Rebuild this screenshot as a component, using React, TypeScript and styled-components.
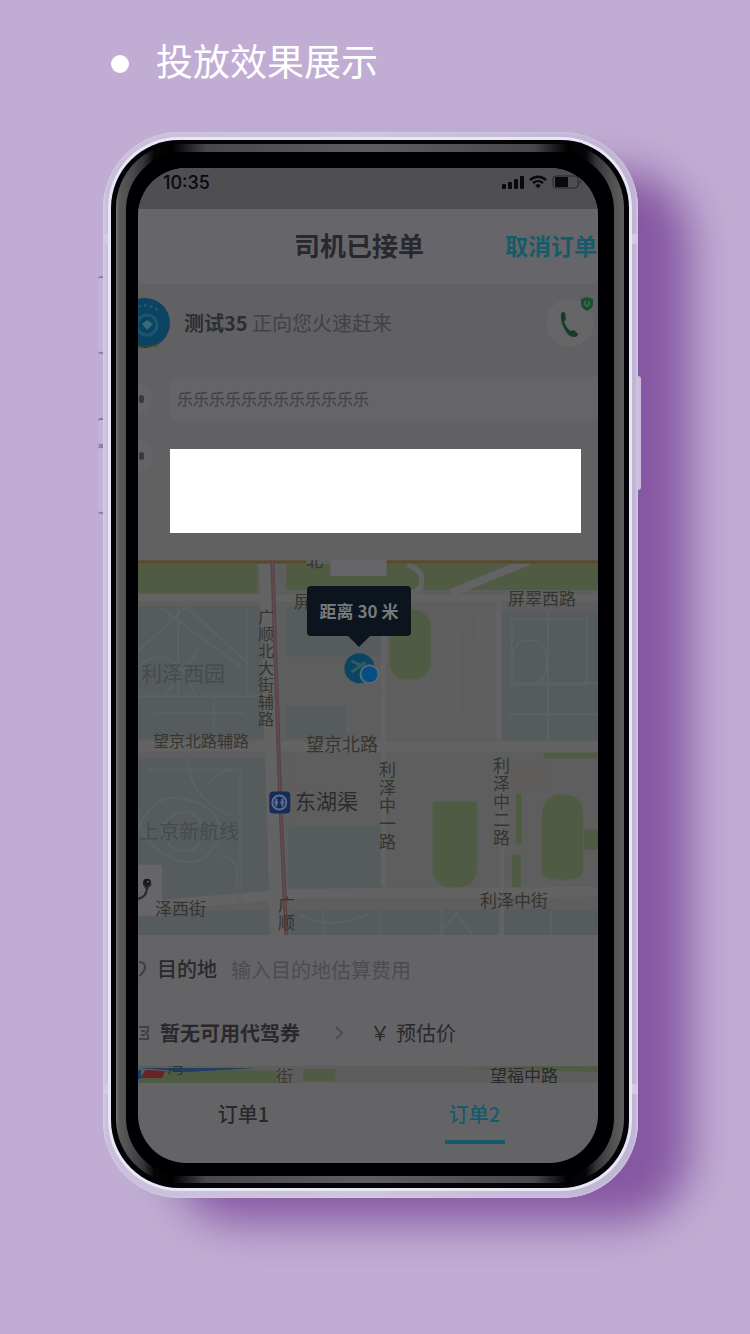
import React from 'react';
import styled, { createGlobalStyle } from 'styled-components';

const GlobalStyle = createGlobalStyle`
  * { box-sizing: border-box; }
  body {
    margin: 0;
    background: #c1add3;
    font-family: "Noto Sans CJK SC", "Liberation Sans", sans-serif;
  }
  button, input { font-family: inherit; border: 0; padding: 0; margin: 0; background: none; }
  h1, h2, p { margin: 0; }
`;

const Page = styled.main`
  min-height: 100vh;
  padding: 34px 112px 136px 103px;
  overflow: hidden;
`;

const Heading = styled.header`
  display: flex;
  align-items: flex-start;
  gap: 27px;
  height: 56px;
  margin-bottom: 42px;
  padding: 0 0 0 8px;
  color: #fff;
`;

const Bullet = styled.span`
  width: 18px;
  height: 18px;
  margin-top: 21px;
  border-radius: 50%;
  background: #fff;
`;

const PageTitle = styled.h1`
  font-size: 37px;
  line-height: 52px;
  font-weight: 400;
  white-space: nowrap;
`;

const Phone = styled.section`
  position: relative;
  min-width: 420px;
  padding: 8px 9px 10px 8px;
  border-radius: 76px;
  background: linear-gradient(90deg, #d3cae2 0, #c9bfdb 4px, #cdc4de 50%, #c0b5d4 calc(100% - 3px), #d0c6e1 100%);
  box-shadow: 60px 32px 44px -8px #8657a2, inset 0 0 2px #ddd4ea;
`;

const SideKey = styled.span<{ $side: 'left' | 'right'; $top: number; $height: number }>`
  position: absolute;
  ${(p) => p.$side}: ${(p) => (p.$side === 'right' ? '-3px' : '-5px')};
  top: ${(p) => p.$top}px;
  width: ${(p) => (p.$side === 'right' ? '3px' : '5px')};
  height: ${(p) => p.$height}px;
  border-radius: ${(p) => (p.$side === 'right' ? '0 3px 3px 0' : '3px 0 0 3px')};
  background: ${(p) => (p.$side === 'right' ? '#c9bfdc' : '#c3b3d8')};
  border-top: ${(p) => (p.$side === 'left' ? '2px solid #8a7d9d' : '0')};
  border-bottom: ${(p) => (p.$side === 'left' ? '2px solid #8a7d9d' : '0')};
`;

const Antenna = styled.span<{ $side: 'left' | 'right'; $top: number }>`
  position: absolute;
  ${(p) => p.$side}: 0;
  top: ${(p) => p.$top}px;
  width: 9px;
  height: 10px;
  background: #d3cbe0;
`;

const Rim = styled.div`
  position: relative;
  padding: 4px 5px 5px;
  border-radius: 68px;
  background: #030307;
  box-shadow: 0 0 0 3px #e9e6f5;
`;

const Bevel = styled.div`
  padding: 8px 10px 7px;
  border-radius: 64px;
  background: linear-gradient(90deg, #76767a 0, #5a5a5a 3px, #4d4d4e 14px, #343436 28px, #050507 38px, #000 56px, #48484a 90px, #5e5e60 50%, #48484a calc(100% - 90px), #000 calc(100% - 56px), #050507 calc(100% - 38px), #343436 calc(100% - 28px), #4d4d4e calc(100% - 14px), #5f5f5f 100%);
`;

const Bezel = styled.div`
  padding: 16px 16px 13px 12px;
  border-radius: 58px;
  background: #000004;
`;

const Screen = styled.div`
  overflow: hidden;
  border-radius: 48px;
  background: #646467;
  color: #29292d;
`;

const StatusBar = styled.div`
  display: flex;
  justify-content: space-between;
  height: 41px;
  padding: 4px 16px 0 25px;
  background: #4f4e52;
  color: #09090b;
  font: 500 18px/22px Inter, "Liberation Sans", sans-serif;
`;

const StatusIcons = styled.span`
  display: flex;
  align-items: center;
  gap: 5px;
  height: 20px;
`;

const NavBar = styled.div`
  display: grid;
  grid-template-columns: 1fr auto 1fr;
  align-items: center;
  height: 75px;
  padding: 0 0 4px;
  margin: 0 -16px 0 0;
  background: #66666a;
`;

const NavTitle = styled.h2`
  grid-column: 2;
  font-size: 26px;
  line-height: 36px;
  font-weight: 700;
  margin-right: 14px;
  margin-left: -20px;
`;

const CancelButton = styled.button`
  justify-self: end;
  margin-right: 17px;
  color: #155b6a;
  font-size: 23px;
  line-height: 36px;
  font-weight: 700;
  white-space: nowrap;
`;

const DriverRow = styled.div`
  display: flex;
  align-items: center;
  height: 77px;
  margin-left: -18px;
  padding-right: 4px;
  background: #616164;
`;

const DriverText = styled.p`
  flex: 1;
  margin-left: 14px;
  font-size: 20px;
  line-height: 28px;
  color: #3f4247;
  white-space: nowrap;
  b { color: #2c2e33; }
`;

const CallButton = styled.button`
  position: relative;
  width: 48px;
  height: 48px;
  border-radius: 50%;
  background: #666669;
`;

const Shield = styled.svg`
  position: absolute;
  top: -2px;
  right: 0;
`;

const Messages = styled.div`
  display: grid;
  gap: 13px;
  padding-top: 16px;
  background: #616164;
`;

const MessageRow = styled.div`
  display: flex;
  align-items: center;
  gap: 17px;
  height: 44px;
  margin-left: -18px;
`;

const Knob = styled.span`
  display: flex;
  align-items: center;
  justify-content: flex-end;
  width: 32px;
  height: 32px;
  padding-right: 8px;
  border-radius: 50%;
  background: #646468;
  &::after { content: ''; width: 5px; height: 8px; border-radius: 3px; background: #3a3a3e; }
`;

const Bubble = styled.p`
  flex: 1;
  padding-left: 8px;
  border-radius: 8px 0 0 8px;
  background: #656569;
  color: #404044;
  font-size: 16px;
  line-height: 42px;
  height: 44px;
  white-space: nowrap;
`;

const AdArea = styled.div`
  margin-top: -29px;
  padding: 0 17px 27px 32px;
  background: #616162;
`;

const AdSlot = styled.div`
  position: relative;
  height: 84px;
  background: #fff;
`;

const Map = styled.div`
  position: relative;
  height: 375px;
  overflow: hidden;
  background: #5d5e5d;
  color: #353530;
  > svg { display: block; width: 100%; height: 100%; }
`;

const Label = styled.span<{ $x: number; $y: number; $size?: number; $vertical?: boolean; $color?: string }>`
  position: absolute;
  left: ${(p) => p.$x}px;
  top: ${(p) => p.$y}px;
  width: ${(p) => (p.$vertical ? '18px' : 'auto')};
  font-size: ${(p) => p.$size ?? 17}px;
  line-height: ${(p) => (p.$vertical ? `${(p.$size ?? 17) + 1}px` : '24px')};
  white-space: ${(p) => (p.$vertical ? 'normal' : 'nowrap')};
  color: ${(p) => p.$color ?? 'inherit'};
`;

const Tooltip = styled.div`
  position: absolute;
  left: 169px;
  top: 26px;
  width: 104px;
  border-radius: 4px;
  background: #0c151d;
  color: #77797c;
  font-size: 17px;
  font-weight: 700;
  line-height: 50px;
  text-align: center;
  white-space: nowrap;
  &::after {
    content: '';
    position: absolute;
    left: 40px;
    top: 49px;
    border: 12px solid transparent;
    border-top-color: #0c151d;
    border-bottom: 0;
  }
`;

const DestinationRow = styled.label`
  display: flex;
  align-items: center;
  gap: 14px;
  height: 68px;
  padding-left: 1px;
  background: #646467;
  font-size: 20px;
  line-height: 28px;
  font-weight: 500;
`;

const DestinationInput = styled.input`
  flex: 1;
  min-width: 0;
  height: 32px;
  font-size: 20px;
  color: #29292d;
  &::placeholder { color: #4c4c50; opacity: 1; }
`;

const CouponRow = styled.div`
  display: flex;
  align-items: center;
  height: 63px;
  padding-left: 1px;
  padding-bottom: 4px;
  font-size: 20px;
  line-height: 28px;
  white-space: nowrap;
`;

const RowIcon = styled.svg`
  flex: none;
  margin-right: 10px;
`;

const DestinationName = styled.span`
  margin-left: -4px;
`;

const CouponName = styled.span`
  font-weight: 700;
`;

const Chevron = styled.svg`
  margin: 0 26px 0 34px;
`;

const Price = styled.span`
  display: flex;
  gap: 6px;
`;

const MapStrip = styled.div`
  position: relative;
  height: 17px;
  overflow: hidden;
  > svg { display: block; width: 100%; height: 100%; }
`;

const Tabs = styled.nav`
  display: flex;
  height: 80px;
  margin: 0 8px 0 -10px;
`;

const Tab = styled.button<{ $active?: boolean }>`
  position: relative;
  flex: 1;
  padding-bottom: 20px;
  color: ${(p) => (p.$active ? '#155b6a' : '#29292d')};
  font-size: 20px;
  font-weight: 500;
  &::after {
    content: '';
    position: absolute;
    left: calc(50% - 30px);
    bottom: 19px;
    width: 60px;
    height: 4px;
    background: ${(p) => (p.$active ? '#17586b' : 'transparent')};
  }
`;

const Signal = () => (
  <svg width="22" height="14" viewBox="0 0 22 14" fill="#09090b">
    <rect x="0" y="9" width="4" height="5" rx="1" />
    <rect x="6" y="7" width="4" height="7" rx="1" />
    <rect x="12" y="4" width="4" height="10" rx="1" />
    <rect x="18" y="1" width="4" height="13" rx="1" />
  </svg>
);

const Wifi = () => (
  <svg width="18" height="14" viewBox="0 0 18 14" fill="none" stroke="#09090b" strokeWidth="2.3">
    <path d="M1 5.1C5.5.6 12.5.6 17 5.1M4 8.2c3-2.8 7-2.8 10 0" />
    <path d="M6.2 10.4c1.7-1.5 3.9-1.5 5.6 0L9 13.3z" fill="#09090b" stroke="none" />
  </svg>
);

const Battery = () => (
  <svg width="30" height="14" viewBox="0 0 30 14">
    <rect x="1" y="1" width="25" height="12" rx="3" fill="none" stroke="#29292c" />
    <rect x="3" y="2" width="13" height="10" rx="1" fill="#09090b" />
    <path d="M27.5 5v4c2-1 2-3 0-4z" fill="#29292c" />
  </svg>
);

const Avatar = () => (
  <svg width="50" height="50" viewBox="0 0 50 50">
    <circle cx="25" cy="25" r="25" fill="#0b4360" />
    <path d="M10 45q15 7 30 0l-3 4H13z" fill="#51502f" />
    <circle cx="27" cy="27" r="10" fill="none" stroke="#1c5570" strokeWidth="3" />
    <path d="m22 26 5-4 6 4-6 6z" fill="#3b6a78" />
    <path d="M18 9q10-5 22 5" fill="none" stroke="#285d70" strokeWidth="2" strokeDasharray="3 3" />
  </svg>
);

const CityMap = () => (
  <svg viewBox="0 0 459 375" preserveAspectRatio="xMinYMin slice">
    <g fill="#565c5e">
      <path d="M0 46h122l5 132H0zM148 46h100v50H148zM148 146h60v32h-60zM0 198h133l5 134-75 7H0zM150 265h96v63h-96zM362 52h97v128h-97zM0 350h130v25H0zM152 349h307v26H152z" />
    </g>
    <path d="M246 48h107v132H246zM150 194h309v70H150zM250 262h209v64H250z" fill="#5e5e5e" />
    <g fill="#505b44">
      <path d="M0 4h119v29H0zM148 4h311v26H148z" />
      <rect x="251" y="50" width="41" height="69" rx="16" />
      <path d="M294 241h44v66q0 20-22 20t-22-20zM403 255q0-21 21-21t20 21v55q0 9-20 9t-21-9z" />
      <path d="M377 233h6v50h-6zM373 294h9v35h-9zM445 269h14v20h-14zM405 192h54v6h-54z" />
    </g>
    <path d="M373 207h38v18h-38z" fill="#605c59" />
    <g stroke="#636363" fill="none">
      <path d="M0 38h459" strokeWidth="7" />
      <path d="M0 186h459M0 346l155-13 304-2" strokeWidth="10" />
      <path d="M245 40v286M360 39v140M363 198v177" strokeWidth="5" />
      <path d="m312 33 78-32" strokeWidth="8" />
      <path d="M128 0l11 375" strokeWidth="14" />
      <path d="M269 5q18 5 13 23l-15 8" strokeWidth="5" />
    </g>
    <g stroke="#5c6263" strokeWidth="2" fill="none">
      <path d="m0 91 48-44 62 56M23 48l82 60M0 136h122M16 153h91M76 136v45M109 48v88M40 47v89M0 107q34-30 58 29M61 89l-35 47M152 134h100M209 145v34" />
      <path d="M10 209h92v133M0 270q14-40 48-31 43 11 30 44-17 30-50 12Q1 278 0 250M50 198q0 38 42 57M81 295q22 0 17 32M23 266q25-28 40-3 5 27-18 27-17 0-22-24M70 225q12-17 30-16" />
      <path d="M373 59h75v65h-75zM373 123h86M409 52v128M370 154h89M374 100q0-21 18-20t16 25-28 18M271 154h72M295 51v100M318 70v85M340 53v28M185 350v25M242 350v25M303 346v29M412 350v25M160 353q30 18 70 0M300 373l18-20 15 20" />
    </g>
    <path d="M0 2h168M236 2h223" stroke="#5b4828" strokeWidth="3" />
    <path d="M192 0h56v16h-56z" fill="#66666a" />
    <path d="M134 0 142 242 148 375" fill="none" stroke="#5a4347" strokeWidth="4" />
    <path d="M134 0 142 242 148 375" fill="none" stroke="#665052" strokeWidth="1" />
    <rect x="131" y="231" width="21" height="22" rx="4" fill="#182b57" />
    <circle cx="141" cy="242" r="7" fill="none" stroke="#5c6d8e" strokeWidth="2" />
    <path d="M138 238v8m6-8v8m-8-4h4m2 0h4" stroke="#5c6d8e" strokeWidth="2" />
    <circle cx="221" cy="108" r="15" fill="#0a4664" />
    <path d="M213 112l14-10M213 101l9 4" stroke="#2f5c66" strokeWidth="3" />
    <circle cx="231" cy="114" r="9" fill="#074e85" stroke="#596a73" strokeWidth="2" />
    <path d="M0 304h22q2 0 2 3v48H0z" fill="#66666a" />
    <circle cx="9" cy="322" r="4" fill="#17191c" />
    <circle cx="10" cy="321" r="1" fill="#66666a" />
    <path d="M6 323q3 8 4 3l3-3M9 328q-1 9-9 10" stroke="#25272a" strokeWidth="2" fill="none" />
  </svg>
);

export default function App() {
  return (
    <>
      <GlobalStyle />
      <Page>
        <Heading>
          <Bullet />
          <PageTitle>投放效果展示</PageTitle>
        </Heading>
        <Phone>
          <SideKey $side="right" $top={244} $height={114} />
          <SideKey $side="left" $top={144} $height={78} />
          <SideKey $side="left" $top={286} $height={28} />
          <SideKey $side="left" $top={314} $height={68} />
          <Antenna $side="left" $top={102} />
          <Antenna $side="right" $top={102} />
          <Antenna $side="left" $top={952} />
          <Antenna $side="right" $top={952} />
          <Rim>
            <Bevel>
              <Bezel>
                <Screen>
                  <StatusBar>
                    <span>10:35</span>
                    <StatusIcons><Signal /><Wifi /><Battery /></StatusIcons>
                  </StatusBar>
                  <NavBar>
                    <NavTitle>司机已接单</NavTitle>
                    <CancelButton>取消订单</CancelButton>
                  </NavBar>
                  <DriverRow>
                    <Avatar />
                    <DriverText><b>测试35</b> 正向您火速赶来</DriverText>
                    <CallButton aria-label="拨打电话">
                      <svg width="48" height="48" viewBox="0 0 48 48">
                        <path d="M15 15q2-4 4-1l1 6-2 3q3 7 7 9l3-1 4 4q0 3-4 3-6 0-10-9-4-8-3-14z" fill="#143f27" />
                      </svg>
                      <Shield width="14" height="14" viewBox="0 0 14 14">
                        <path d="m7 0 6 2v5q0 4-6 7-6-3-6-7V2z" fill="#1b4d31" />
                        <path d="M5 4v2q0 3 2 3t2-3V4" fill="none" stroke="#4f6a58" strokeWidth="1.4" />
                      </Shield>
                    </CallButton>
                  </DriverRow>
                  <Messages>
                    <MessageRow><Knob /><Bubble>乐乐乐乐乐乐乐乐乐乐乐乐</Bubble></MessageRow>
                    <MessageRow><Knob /></MessageRow>
                  </Messages>
                  <AdArea><AdSlot /></AdArea>
                  <Map>
                    <CityMap />
                    <Label $x={168} $y={-12}>北</Label>
                    <Label $x={156} $y={29}>屏</Label>
                    <Label $x={370} $y={26}>屏翠西路</Label>
                    <Label $x={3} $y={100} $size={21} $color="#464b4c">利泽西园</Label>
                    <Label $x={120} $y={48} $size={16} $vertical>广顺北大街辅路</Label>
                    <Label $x={15} $y={168} $size={16}>望京北路辅路</Label>
                    <Label $x={168} $y={171} $size={18}>望京北路</Label>
                    <Label $x={157} $y={228} $size={21} $color="#2b2c30">东湖渠</Label>
                    <Label $x={1} $y={259} $size={20} $color="#464b4c">上京新航线</Label>
                    <Label $x={241} $y={200} $vertical>利泽中一路</Label>
                    <Label $x={355} $y={196} $vertical>利泽中二路</Label>
                    <Label $x={17} $y={336}>泽西街</Label>
                    <Label $x={342} $y={328}>利泽中街</Label>
                    <Label $x={140} $y={335} $vertical>广顺</Label>
                    <Tooltip>距离 30 米</Tooltip>
                  </Map>
                  <DestinationRow>
                    <svg width="8" height="20" viewBox="0 0 8 20"><path d="M0 3q6 0 6 5T0 17" fill="none" stroke="#3f3f43" strokeWidth="2" /></svg>
                    <DestinationName>目的地</DestinationName>
                    <DestinationInput placeholder="输入目的地估算费用" />
                  </DestinationRow>
                  <CouponRow>
                    <RowIcon width="11" height="18" viewBox="0 0 11 18"><path d="M0 3h9v4l-2 2 2 2v4H0M2 7h4m-4 4h4" fill="none" stroke="#414145" strokeWidth="2" /></RowIcon>
                    <CouponName>暂无可用代驾券</CouponName>
                    <Chevron width="10" height="16" viewBox="0 0 10 16"><path d="m2 2 6 6-6 6" fill="none" stroke="#4c4c50" strokeWidth="2" /></Chevron>
                    <Price><span>￥</span><span>预估价</span></Price>
                  </CouponRow>
                  <MapStrip>
                    <svg viewBox="0 0 459 17" preserveAspectRatio="none">
                      <path d="M0 0h459v17H0z" fill="#5d5e5c" />
                      <path d="M0 17V8L58 2l81 3v12zM165 3h32v12h-32zM330 3l60-3h69v6z" fill="#505b44" />
                      <path d="M0 2h118L50 6z" fill="#253d62" />
                      <path d="M0 4h3v9H0z" fill="#15416c" />
                      <path d="m7 4 20 1-3 7H3z" fill="#692326" />
                    </svg>
                    <Label $x={29} $y={-12} $color="#22323e">湾</Label>
                    <Label $x={138} $y={-2} $color="#40372f">街</Label>
                    <Label $x={352} $y={-3}>望福中路</Label>
                  </MapStrip>
                  <Tabs>
                    <Tab>订单1</Tab>
                    <Tab $active>订单2</Tab>
                  </Tabs>
                </Screen>
              </Bezel>
            </Bevel>
          </Rim>
        </Phone>
      </Page>
    </>
  );
}
